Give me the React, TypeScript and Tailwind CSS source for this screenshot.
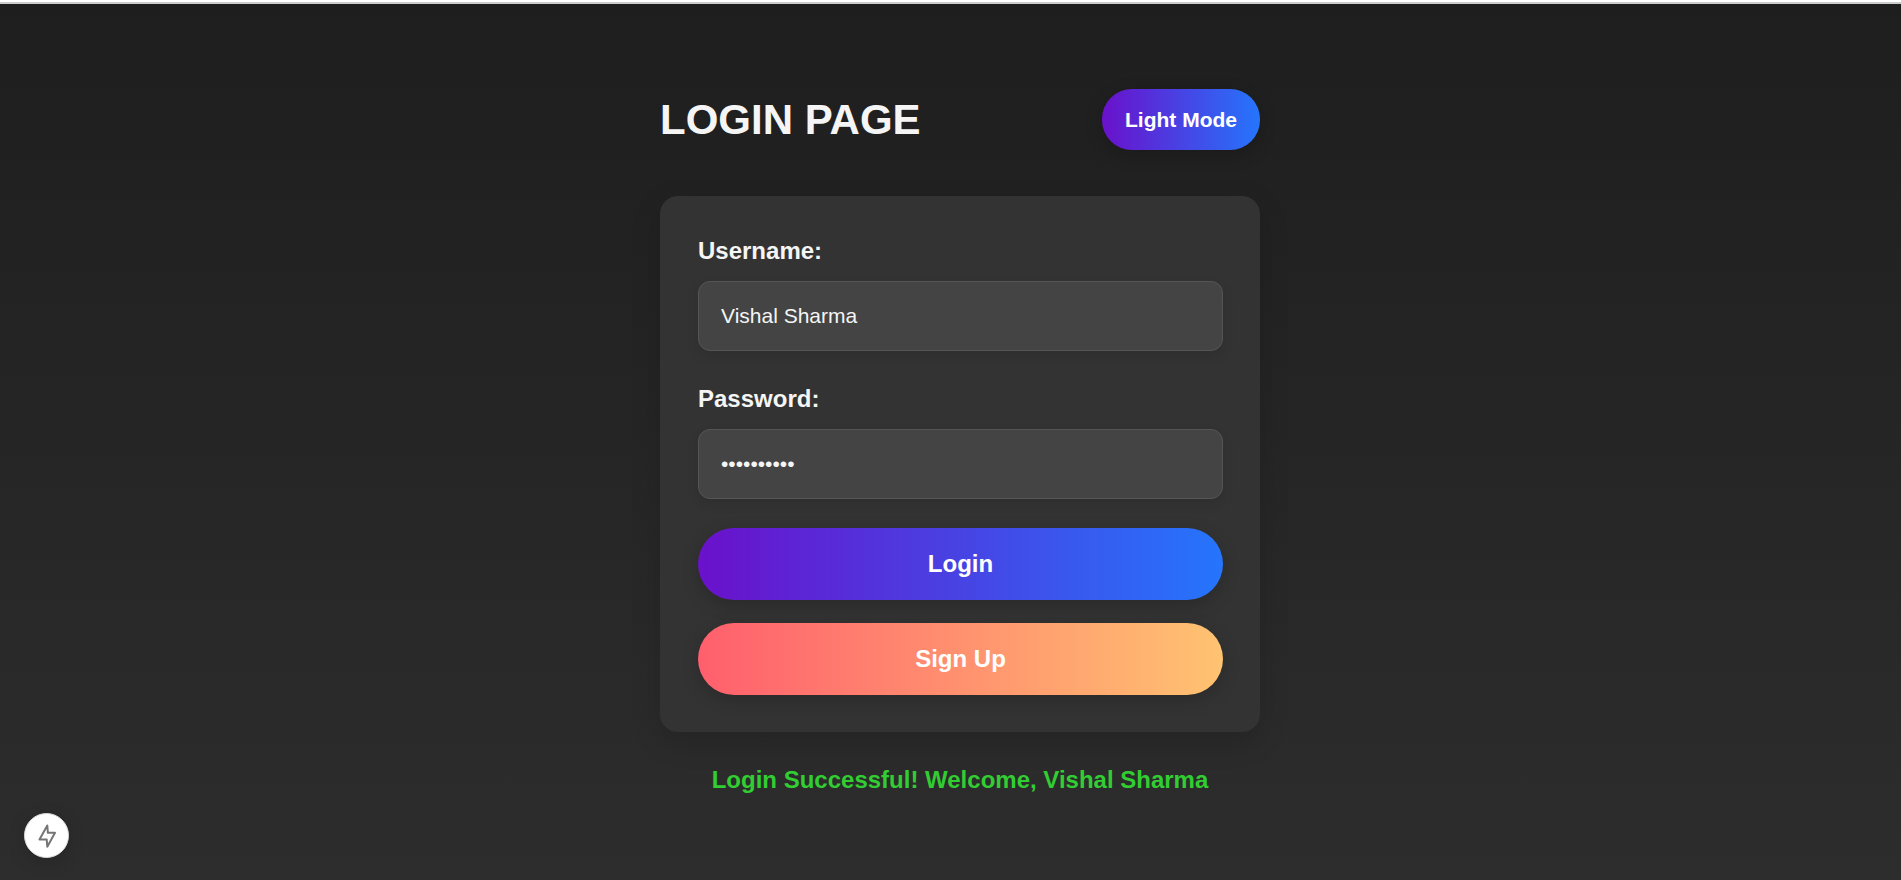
import { useState, type FormEvent } from "react";

const inputClass =
  "h-[70px] w-full rounded-xl border border-[#555] bg-[#444] px-[22px] text-[21px] text-[#f5f5f5] shadow-[0_5px_12px_rgba(0,0,0,0.1)] outline-none";
const labelClass = "mb-[14px] block text-2xl font-bold text-[#f5f5f5]";
const buttonClass =
  "h-[72px] w-full rounded-full text-2xl font-bold text-white shadow-[0_5px_18px_rgba(0,0,0,0.2)]";

function BoltBadge() {
  return (
    <button
      type="button"
      aria-label="Status"
      className="fixed bottom-[22px] left-6 flex size-[45px] items-center justify-center rounded-full border border-[#ddd] bg-white shadow-[0_4px_18px_rgba(0,0,0,0.15)]"
    >
      <svg viewBox="0 0 18 24" className="h-6 w-[18px]" fill="none" stroke="#757575" strokeWidth="2" strokeLinejoin="round">
        <path d="M9.3 1.5 1.5 15.4H8.7L9.3 22.7 17 8.8H9.9Z" />
      </svg>
    </button>
  );
}

export default function App() {
  const [username, setUsername] = useState("Vishal Sharma");
  const [password, setPassword] = useState("vishal1234");
  const [message, setMessage] = useState("Login Successful! Welcome, Vishal Sharma");

  const login = (event: FormEvent) => {
    event.preventDefault();
    setMessage(`Login Successful! Welcome, ${username}`);
  };

  return (
    <div className="flex min-h-screen flex-col bg-white font-['Liberation_Sans',Arial,sans-serif]">
      <main className="mt-0.5 flex grow flex-col items-center border-t-2 border-[#ccc] bg-linear-to-b/srgb from-[#1e1e1e] to-[#2d2d2d] pt-[85px] pl-[19px]">
        <div className="w-full max-w-[600px]">
          <header className="mb-[46px] flex items-center justify-between">
            <h1 className="text-[42px] leading-[60px] font-bold text-[#f5f5f5]">LOGIN PAGE</h1>
            <button
              type="button"
              className="h-[61px] rounded-[30px] bg-linear-to-r/srgb from-[#6a11cb] to-[#2575fc] px-[23px] text-[21px] font-bold text-white shadow-[0_5px_18px_rgba(0,0,0,0.2)]"
            >
              Light Mode
            </button>
          </header>
          <form
            onSubmit={login}
            className="rounded-[18px] bg-[#333] pt-[39px] pr-[37px] pb-[37px] pl-[38px] shadow-[0_10px_30px_rgba(0,0,0,0.15)]"
          >
            <div className="mb-8">
              <label htmlFor="username" className={labelClass}>
                Username:
              </label>
              <input
                id="username"
                type="text"
                value={username}
                onChange={(e) => setUsername(e.target.value)}
                className={inputClass}
              />
            </div>
            <div className="mb-[29px]">
              <label htmlFor="password" className={labelClass}>
                Password:
              </label>
              <input
                id="password"
                type="password"
                value={password}
                onChange={(e) => setPassword(e.target.value)}
                className={inputClass}
              />
            </div>
            <div className="flex flex-col gap-[23px]">
              <button type="submit" className={`${buttonClass} bg-linear-to-r/srgb from-[#6a11cb] to-[#2575fc]`}>
                Login
              </button>
              <button type="button" className={`${buttonClass} bg-linear-to-r/srgb from-[#ff5f6d] to-[#ffc371]`}>
                Sign Up
              </button>
            </div>
          </form>
          <p role="status" className="mt-8 text-center text-2xl font-bold text-[#32cd32]">
            {message}
          </p>
        </div>
      </main>
      <BoltBadge />
    </div>
  );
}
